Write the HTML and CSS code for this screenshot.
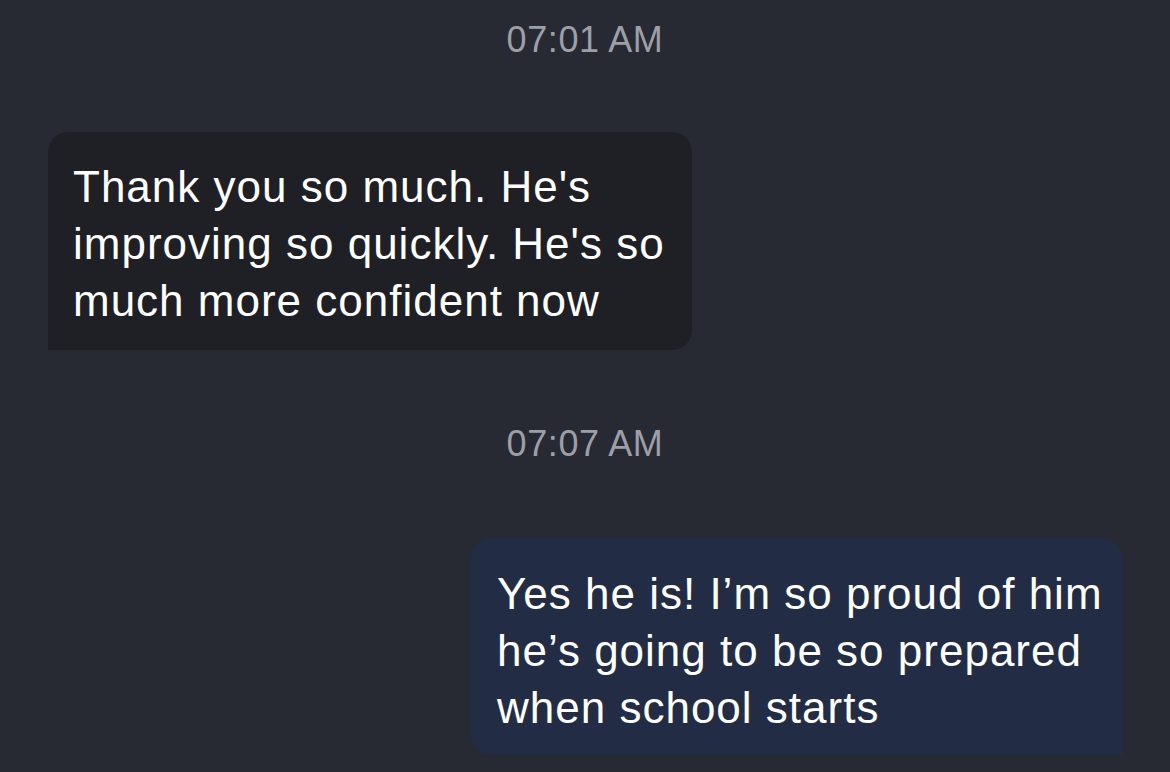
FILE: index.html
```html
<!DOCTYPE html>
<html>
<head>
<meta charset="utf-8">
<link rel="stylesheet" href="styles.css">
</head>
<body>
<div class="chat">
  <div class="time">07:01 AM</div>
  <div class="row in">
    <div class="bubble incoming">Thank you so much. He's<br>improving so quickly. He's so<br>much more confident now</div>
  </div>
  <div class="time second">07:07 AM</div>
  <div class="row out">
    <div class="bubble outgoing">Yes he is! I’m so proud of him<br>he’s going to be so prepared<br>when school starts</div>
  </div>
</div>
</body>
</html>
```
FILE: styles.css
```css
html, body {
  margin: 0;
  padding: 0;
  background: #272a33;
  height: 100%;
}
body {
  width: 1170px;
  height: 772px;
  overflow: hidden;
  font-family: "Liberation Sans", Arial, sans-serif;
}
.chat {
  display: flex;
  flex-direction: column;
}
.time {
  text-align: center;
  color: #9d9fa7;
  font-size: 36px;
  line-height: 40px;
  letter-spacing: 0.6px;
  padding-top: 20px;
}
.time.second {
  padding-top: 74px;
}
.row {
  display: flex;
}
.row.in {
  padding: 72px 0 0 48px;
}
.row.out {
  justify-content: flex-end;
  padding: 74px 48px 0 0;
}
.bubble {
  color: #ffffff;
  font-size: 44px;
  line-height: 57px;
  letter-spacing: 1px;
  border-radius: 20px;
  box-sizing: border-box;
  white-space: nowrap;
}
.incoming {
  background: #1f2025;
  width: 644px;
  padding: 26px 10px 21px 25px;
  border-bottom-left-radius: 0;
}
.outgoing {
  background: #222d45;
  width: 651px;
  padding: 27px 10px 19px 26px;
  border-bottom-right-radius: 0;
}
```
